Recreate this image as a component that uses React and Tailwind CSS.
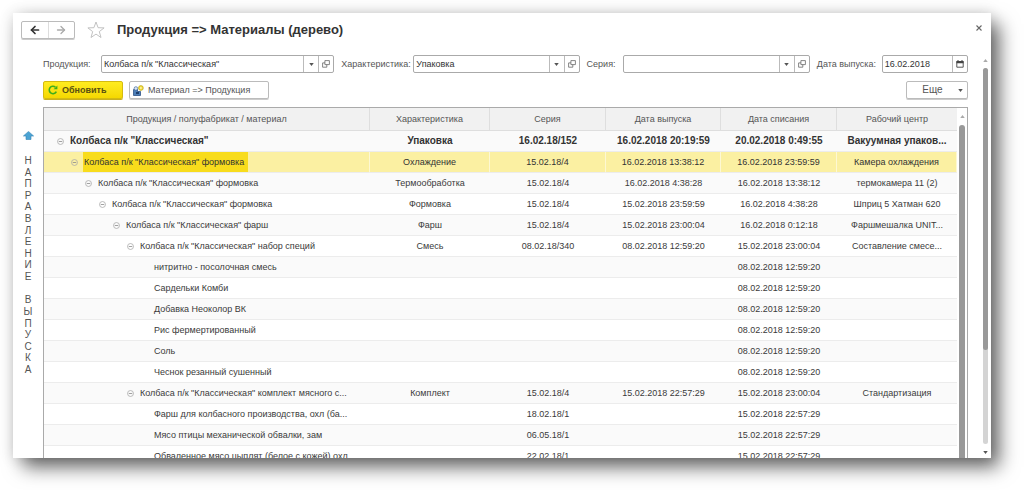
import { ArrowLeft, ArrowRight } from 'lucide-react';

const ROWS = [
    { level: 0, open: true, bold: true, cells: ['Колбаса п/к "Классическая"', 'Упаковка', '16.02.18/152', '16.02.2018 20:19:59', '20.02.2018 0:49:55', 'Вакуумная упаков...'] },
    { level: 1, open: true, selected: true, cells: ['Колбаса п/к "Классическая" формовка', 'Охлаждение', '15.02.18/4', '16.02.2018 13:38:12', '16.02.2018 23:59:59', 'Камера охлаждения'] },
    { level: 2, open: true, cells: ['Колбаса п/к "Классическая" формовка', 'Термообработка', '15.02.18/4', '16.02.2018 4:38:28', '16.02.2018 13:38:12', 'термокамера 11 (2)'] },
    { level: 3, open: true, cells: ['Колбаса п/к "Классическая" формовка', 'Формовка', '15.02.18/4', '15.02.2018 23:59:59', '16.02.2018 4:38:28', 'Шприц 5 Хатман 620'] },
    { level: 4, open: true, cells: ['Колбаса п/к "Классическая" фарш', 'Фарш', '15.02.18/4', '15.02.2018 23:00:04', '16.02.2018 0:12:18', 'Фаршмешалка UNIT...'] },
    { level: 5, open: true, cells: ['Колбаса п/к "Классическая" набор специй', 'Смесь', '08.02.18/340', '08.02.2018 12:59:20', '15.02.2018 23:00:04', 'Составление смесе...'] },
    { level: 6, cells: ['нитритно - посолочная смесь', '', '', '', '08.02.2018 12:59:20', ''] },
    { level: 6, cells: ['Сардельки Комби', '', '', '', '08.02.2018 12:59:20', ''] },
    { level: 6, cells: ['Добавка Неоколор ВК', '', '', '', '08.02.2018 12:59:20', ''] },
    { level: 6, cells: ['Рис фермертированный', '', '', '', '08.02.2018 12:59:20', ''] },
    { level: 6, cells: ['Соль', '', '', '', '08.02.2018 12:59:20', ''] },
    { level: 6, cells: ['Чеснок резанный сушенный', '', '', '', '08.02.2018 12:59:20', ''] },
    { level: 5, open: true, cells: ['Колбаса п/к "Классическая" комплект мясного с...', 'Комплект', '15.02.18/4', '15.02.2018 22:57:29', '15.02.2018 23:00:04', 'Стандартизация'] },
    { level: 6, cells: ['Фарш для колбасного производства, охл (ба...', '', '18.02.18/1', '', '15.02.2018 22:57:29', ''] },
    { level: 6, cells: ['Мясо птицы механической обвалки, зам', '', '06.05.18/1', '', '15.02.2018 22:57:29', ''] },
    { level: 6, cells: ['Обваленное мясо цыплят (белое с кожей) охл', '', '22.02.18/1', '', '15.02.2018 22:57:29', ''] },
];

const COLUMNS = ['Продукция / полуфабрикат / материал', 'Характеристика', 'Серия', 'Дата выпуска', 'Дата списания', 'Рабочий центр'];

const DIRECTION = 'НАПРАВЛЕНИЕ ВЫПУСКА';

function Caret({ up, className = 'text-[#555]' }) {
    return (
        <svg viewBox="0 0 6 4" className={`w-[5px] h-[3px] shrink-0 ${className}`} fill="currentColor" aria-hidden="true">
            <path d={up ? 'M0 4 3 0l3 4z' : 'M0 0h6L3 4z'} />
        </svg>
    );
}

function OpenIcon() {
    return (
        <svg viewBox="0 0 8 8" className="w-2 h-2" fill="none" stroke="#666" strokeWidth="0.8" aria-hidden="true">
            <path d="M2.9 0.6h4.5v4H2.9z" />
            <path d="M2.9 2.9H0.6v4.3h4.2V4.6" />
        </svg>
    );
}

function CalendarIcon() {
    return (
        <svg viewBox="0 0 8 8" className="w-2 h-2" fill="none" aria-hidden="true">
            <path d="M0.8 1.5h6.4v5.7H0.8z" stroke="#444" strokeWidth="0.9" />
            <path d="M0.5 1h7v2.2h-7zM1.5 0h1v1h-1zM5.5 0h1v1h-1z" fill="#444" />
        </svg>
    );
}

function Field({ id, label, value, labelClass, className, date }) {
    return (
        <div className={`flex items-center min-w-0 ${className}`}>
            <label htmlFor={id} className={`shrink-0 whitespace-nowrap text-[#555] ${labelClass}`}>{label}</label>
            <div className="flex flex-1 min-w-0 h-[18px] border border-[#aaa] rounded-xs bg-white">
                <input id={id} type="text" defaultValue={value} className="flex-1 min-w-0 px-[2px] text-[#333] outline-none" />
                {!date && (
                    <button type="button" aria-label="Выбрать" className="w-[15px] shrink-0 border-l border-[#bbb] flex items-center justify-center">
                        <Caret />
                    </button>
                )}
                <button type="button" aria-label="Открыть" className="w-[15px] shrink-0 border-l border-[#bbb] flex items-center justify-center">
                    {date ? <CalendarIcon /> : <OpenIcon />}
                </button>
            </div>
        </div>
    );
}

function TreeRow({ row, index }) {
    const bg = row.selected ? 'bg-[#fbf0a2]' : index % 2 === 0 ? 'bg-[#fafafa]' : 'bg-white';
    const color = row.bold || row.selected ? 'text-[#333]' : 'text-[#3a3a3a]';
    return (
        <tr className={`h-[21px] ${bg} ${color} ${row.bold ? 'font-bold text-[10px]' : ''}`}>
            {row.cells.map((cell, i) => i === 0 ? (
                <td key={i} className={`p-0 border-b border-[#ececec] overflow-hidden whitespace-nowrap ${row.selected ? 'border-r border-r-[#fdf8d3]' : ''}`}>
                    <div className="flex items-center h-5" style={{ paddingLeft: 13 + row.level * 14 }}>
                        {row.open ? (
                            <button type="button" aria-label="Свернуть" className="w-[12px] shrink-0">
                                <svg viewBox="0 0 8 8" className="w-[7px] h-[7px]" fill="none" stroke="#aaa" strokeWidth="0.9">
                                    <circle cx="4" cy="4" r="3.4" />
                                    <path d="M2 4h4" stroke="#888" />
                                </svg>
                            </button>
                        ) : <span className="w-[12px] shrink-0" />}
                        <span className={`px-px h-5 leading-5 ${row.selected ? 'bg-[#f8dc1c] pr-1' : ''}`}>{cell}</span>
                    </div>
                </td>
            ) : (
                <td key={i} className={`p-0 border-b border-[#ececec] text-center overflow-hidden whitespace-nowrap ${row.selected ? 'border-r border-r-[#fdf8d3]' : ''}`}>{cell}</td>
            ))}
        </tr>
    );
}

export default function App() {
    return (
        <div className="h-screen bg-white pt-[13px] pl-[13px] pr-[33px] pb-8 overflow-hidden font-['Liberation_Sans',Arial,sans-serif] text-[9px] leading-3">
            <div className="h-full flex flex-col overflow-hidden bg-white shadow-[9px_10px_18px_-1px_rgba(0,0,0,0.6),0_0_14px_rgba(0,0,0,0.14)]">
                <header className="flex items-center h-[34px] shrink-0 pl-2 pr-2">
                    <div className="flex h-[18px] w-[54px] border border-[#bbb] rounded-xs shadow-[0_1px_0_#ccc]">
                        <button type="button" aria-label="Назад" className="flex-1 flex items-center justify-center border-r border-[#ddd]">
                            <ArrowLeft className="w-3 h-3 text-[#333]" strokeWidth={3.4} />
                        </button>
                        <button type="button" aria-label="Вперед" className="flex-1 flex items-center justify-center">
                            <ArrowRight className="w-3 h-3 text-[#aaa]" strokeWidth={2.6} />
                        </button>
                    </div>
                    <button type="button" aria-label="В избранное" className="ml-3">
                        <svg viewBox="0 0 18 18" className="w-[18px] h-[18px]" fill="none" stroke="#bbb" strokeWidth="0.9">
                            <path d="M9 1l2.1 5.7 6 .2-4.8 3.7 1.7 5.9L9 13.1l-5 3.4 1.7-5.9L.9 6.9l6-.2z" />
                        </svg>
                    </button>
                    <h1 className="ml-3 text-[13px] leading-4 font-bold text-[#333] whitespace-nowrap">Продукция =&gt; Материалы (дерево)</h1>
                    <button type="button" aria-label="Закрыть" className="ml-auto pb-1">
                        <svg viewBox="0 0 8 8" className="w-2 h-2" stroke="#666" strokeWidth="1.1">
                            <path d="M1.5 1.5l5 5M6.5 1.5l-5 5" />
                        </svg>
                    </button>
                </header>

                <div className="flex flex-1 min-h-0">
                    <main className="flex flex-col flex-1 min-w-0 min-h-0 pt-2">
                        <div className="pl-[30px]">
                            <form className="flex gap-[7px]">
                                <Field id="product" label="Продукция:" value={'Колбаса п/к "Классическая"'} labelClass="w-[58px]" className="flex-[291]" />
                                <Field id="feature" label="Характеристика:" value="Упаковка" labelClass="w-[72px]" className="flex-[238]" />
                                <Field id="series" label="Серия:" value="" labelClass="w-[36px]" className="flex-[223]" />
                                <Field id="date" label="Дата выпуска:" value="16.02.2018" labelClass="w-[65px]" className="flex-[151]" date />
                            </form>
                            <div className="flex gap-[6px] mt-2">
                                <button type="button" className="flex items-center gap-1 h-[18px] w-20 pl-1 rounded-xs border border-[#d5bb10] bg-linear-to-b from-[#ffec1f] to-[#f5d800] shadow-[0_1px_0_#c9b020] font-bold text-[#5a5010]">
                                    <svg viewBox="0 0 10 10" className="w-[10px] h-[10px]" fill="none" stroke="#3fae1c" strokeWidth="1.6">
                                        <path d="M8.3 6.6A3.7 3.7 0 1 1 7.4 2.2" />
                                        <path d="M9.4 0.4v3.9H5.6z" fill="#3fae1c" stroke="none" />
                                    </svg>
                                    Обновить
                                </button>
                                <button type="button" className="flex items-center gap-1 h-[18px] w-[140px] pl-[3px] rounded-xs border border-[#bbb] shadow-[0_1px_0_#ccc] text-[#555] whitespace-nowrap">
                                    <svg viewBox="0 0 11 11" className="w-[11px] h-[11px]">
                                        <path d="M0.5 4.5h4v2h3v4h-7z" fill="#4d7fb8" stroke="#2c5286" strokeWidth="0.8" />
                                        <circle cx="2.9" cy="3.5" r="1.8" fill="#dbe6f3" stroke="#41699c" strokeWidth="0.7" />
                                        <path d="M3 7h3v2H3z" fill="#1f3f6e" />
                                        <circle cx="7.9" cy="3" r="2.4" fill="#f5df3a" stroke="#b9a21c" strokeWidth="0.7" />
                                        <circle cx="7.9" cy="3" r="0.8" fill="#fff" />
                                    </svg>
                                    Материал =&gt; Продукция
                                </button>
                                <button type="button" className="ml-auto flex items-center h-[18px] w-[62px] pr-1 rounded-xs border border-[#bbb] shadow-[0_1px_0_#ccc] text-[10px] text-[#555]">
                                    <span className="flex-1">Еще</span>
                                    <Caret />
                                </button>
                            </div>
                        </div>

                        <div className="flex flex-1 min-h-0 mt-2">
                            <aside className="w-[30px] shrink-0 flex flex-col items-center pt-6">
                                <svg viewBox="0 0 11 9" className="w-[11px] h-[9px]">
                                    <path d="M5.5 0.4 10.6 5H8v3.5H3V5H0.4z" fill="#4ba3d3" stroke="#3585b5" strokeWidth="0.6" />
                                </svg>
                                <div className="flex flex-col items-center justify-between h-[220px] mt-[15px] text-[10px] leading-[11px] text-[#555]">
                                    {DIRECTION.split('').map((ch, i) => <span key={i} className="h-[11px]">{ch}</span>)}
                                </div>
                            </aside>

                            <div className="flex flex-1 min-w-0 overflow-hidden border border-b-0 border-[#aaa]">
                                <div className="flex-1 min-w-0">
                                    <table className="w-full table-fixed border-separate border-spacing-0">
                                        <colgroup>
                                            <col />
                                            <col className="w-[120px]" />
                                            <col className="w-[116px]" />
                                            <col className="w-[115px]" />
                                            <col className="w-[116px]" />
                                            <col className="w-[120px]" />
                                        </colgroup>
                                        <thead>
                                            <tr className="h-[23px] bg-[#f1f1f1] text-[#555]">
                                                {COLUMNS.map((name) => (
                                                    <th key={name} className="p-0 font-normal whitespace-nowrap border-r border-b border-[#dedede] last:border-r-0">{name}</th>
                                                ))}
                                            </tr>
                                        </thead>
                                        <tbody>
                                            {ROWS.map((row, i) => <TreeRow key={i} row={row} index={i} />)}
                                        </tbody>
                                    </table>
                                </div>
                                <div className="w-[10px] shrink-0 flex flex-col items-center pt-[7px]">
                                    <Caret up className="text-[#aaa]" />
                                    <div className="w-[6px] flex-1 mt-[7px] rounded-t-full bg-[#999]" />
                                </div>
                            </div>
                        </div>
                    </main>

                    <div className="w-[23px] shrink-0 flex flex-col items-center pl-3 pt-3 pb-1">
                        <Caret up className="text-[#aaa]" />
                        <div className="w-[5px] flex-1 mt-[6px] mb-[7px] rounded-full bg-[#d4d4d4]">
                            <div className="w-full h-3/4 rounded-full bg-[#999]" />
                        </div>
                        <Caret />
                    </div>
                </div>
            </div>
        </div>
    );
}
